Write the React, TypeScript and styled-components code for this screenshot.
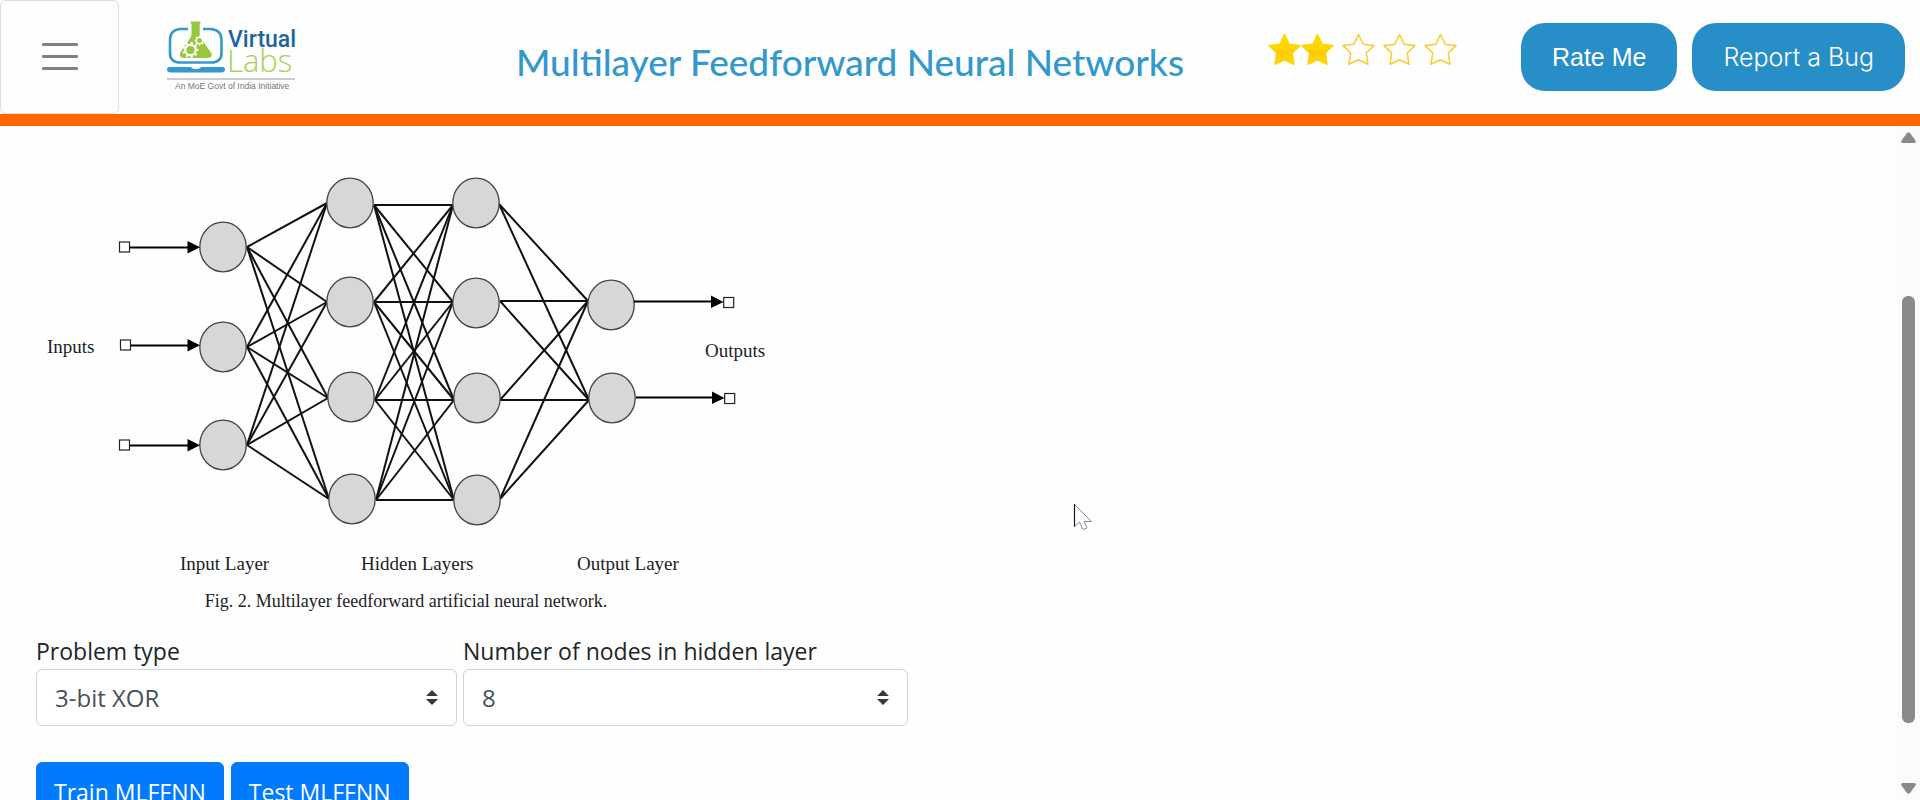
import React from 'react';
import styled, { createGlobalStyle, css } from 'styled-components';

const GlobalStyle = createGlobalStyle`
  *, *::before, *::after { box-sizing: border-box; }
  body {
    margin: 0;
    background: #fefefe;
    color: #212529;
    font-family: "Open Sans", "Noto Sans", sans-serif;
    font-size: 23px;
    line-height: 36px;
  }
`;

const Page = styled.div`
  display: flex;
  flex-direction: column;
  height: 100vh;
  overflow: hidden;
`;

const Header = styled.header`
  display: flex;
  align-items: flex-start;
  flex: none;
  border-bottom: 12px solid #ff6600;
  padding-right: 15px;
`;

const MenuButton = styled.button`
  display: flex;
  flex-direction: column;
  align-items: center;
  justify-content: center;
  gap: 9px;
  flex: none;
  width: 119px;
  height: 114px;
  padding: 0 0 2px;
  background: transparent;
  border: 1px solid #dfdfdf;
  border-radius: 6px;
`;

const MenuLine = styled.span`
  width: 36px;
  height: 3px;
  border-radius: 1px;
  background: #808080;
`;

const LogoLink = styled.a`
  flex: none;
  margin: 20px 0 0 48px;
  line-height: 0;
`;

const Title = styled.h1`
  margin: 40px 84px 0 auto;
  color: #3399cc;
  font-family: Lato, sans-serif;
  font-size: 37px;
  font-weight: 500;
  line-height: 44px;
  white-space: nowrap;
`;

const Rating = styled.div`
  display: flex;
  flex: none;
  margin: 33px 64px 0 0;
`;

const StarIcon = styled.svg<{ $filled: boolean }>`
  display: block;
  width: 33px;
  height: 33px;
  ${({ $filled }) =>
    !$filled &&
    css`
      margin-left: 8px;
    `}
`;

const Actions = styled.div`
  display: flex;
  flex: none;
  gap: 15px;
  padding-top: 23px;
`;

const ActionButton = styled.button<{ $strong?: boolean }>`
  height: 68px;
  padding: 0 31px;
  border: 0;
  border-radius: 24px;
  background: #288ec8;
  color: #ffffff;
  font-family: ${({ $strong }) => ($strong ? '"Liberation Sans", Arial' : 'Inter')}, sans-serif;
  font-size: 25px;
  font-weight: ${({ $strong }) => ($strong ? 400 : 300)};
  white-space: nowrap;
`;

const Body = styled.div`
  display: flex;
  flex: 1;
  min-height: 0;
`;

const Content = styled.main`
  flex: 1;
  min-width: 0;
  overflow: hidden;
  padding: 0 36px;
`;

const Figure = styled.figure`
  width: 740px;
  max-width: 100%;
  margin: 0;
  color: #1d1d26;
  font-family: "Liberation Serif", serif;
`;

const Diagram = styled.svg`
  display: block;
  width: 100%;
  height: auto;
`;

const Caption = styled.figcaption`
  font-size: 18px;
  line-height: 30px;
  text-align: center;
`;

const Fields = styled.form`
  display: flex;
  gap: 6px;
  margin-top: 17px;
`;

const Field = styled.div<{ $width: number }>`
  flex: 0 1 ${({ $width }) => $width}px;
`;

const FieldLabel = styled.label`
  display: block;
  line-height: 36px;
`;

const SelectWrap = styled.div`
  position: relative;
`;

const Select = styled.select`
  display: block;
  width: 100%;
  height: 57px;
  padding: 0 48px 0 18px;
  appearance: none;
  border: 1px solid #ced4da;
  border-radius: 6px;
  background: #ffffff;
  color: #495057;
  font: inherit;
  font-size: 24px;
`;

const SelectArrows = styled.svg`
  position: absolute;
  top: 21px;
  right: 19px;
  width: 12px;
  height: 15px;
  fill: #343a40;
  pointer-events: none;
`;

const Buttons = styled.div`
  display: flex;
  gap: 7px;
  margin: 36px 0;
`;

const PrimaryButton = styled.button`
  height: 57px;
  padding: 2px 17px 0;
  border: 1px solid #007bff;
  border-radius: 6px;
  background: #007bff;
  color: #ffffff;
  font: inherit;
  white-space: nowrap;
`;

const Scrollbar = styled.div`
  display: flex;
  flex-direction: column;
  align-items: center;
  flex: none;
  width: 23px;
  padding: 6px 0;
  background: #fbfbfb;
`;

const ScrollArrow = styled.svg`
  flex: none;
  width: 15px;
  height: 11px;
  fill: #8a8a8a;
`;

const ScrollTrack = styled.div`
  display: grid;
  grid-template-rows: 153fr 427fr 60fr;
  flex: 1;
`;

const ScrollThumb = styled.div`
  grid-row: 2;
  width: 13px;
  border-radius: 6px;
  background: #8a8a8a;
`;

const Pointer = styled.svg`
  position: fixed;
  left: 1073px;
  top: 502px;
  width: 20px;
  height: 30px;
  pointer-events: none;
`;

type Point = [number, number];

const inputNodes: Point[] = [[223, 247], [223, 347], [223, 445]];
const hiddenA: Point[] = [[350, 203], [350, 302], [351, 397], [352, 499]];
const hiddenB: Point[] = [[476, 203], [476, 303], [477, 398], [477, 500]];
const outputNodes: Point[] = [[611, 305], [612, 398]];

const inputOut: Point[] = [[247, 247], [247, 347], [247, 445]];
const hiddenAIn: Point[] = [[327, 203], [327, 302], [328, 398], [329, 499]];
const hiddenAOut: Point[] = [[374, 205], [374, 302], [375, 400], [376, 500]];
const hiddenBIn: Point[] = [[453, 205], [453, 302], [454, 400], [454, 500]];
const hiddenBOut: Point[] = [[499, 204], [500, 301], [500, 400], [500, 499]];
const outputIn: Point[] = [[588, 301], [589, 400]];

const inputArrows = [
  { x: 120, y: 247 },
  { x: 121, y: 345 },
  { x: 120, y: 445 },
];
const outputArrows = [
  { from: 634, x: 724, y: 302 },
  { from: 636, x: 725, y: 398 },
];

const layerLabels = [
  { x: 47, y: 353, text: 'Inputs' },
  { x: 705, y: 357, text: 'Outputs' },
  { x: 180, y: 570, text: 'Input Layer' },
  { x: 361, y: 570, text: 'Hidden Layers' },
  { x: 577, y: 570, text: 'Output Layer' },
];

function links(from: Point[], to: Point[], key: string) {
  return from.flatMap(([x1, y1], i) =>
    to.map(([x2, y2], j) => <line key={`${key}${i}${j}`} x1={x1} y1={y1} x2={x2} y2={y2} />),
  );
}

function NetworkDiagram() {
  return (
    <Diagram viewBox="36 126 740 460" role="img" aria-label="Multilayer feedforward neural network">
      <g stroke="#111111" strokeWidth="2">
        {links(inputOut, hiddenAIn, 'a')}
        {links(hiddenAOut, hiddenBIn, 'b')}
        {links(hiddenBOut, outputIn, 'c')}
      </g>
      <g fill="#d7d7d7" stroke="#444444" strokeWidth="1.3">
        {[...inputNodes, ...hiddenA, ...hiddenB, ...outputNodes].map(([cx, cy]) => (
          <ellipse key={`${cx}-${cy}`} cx={cx} cy={cy} rx="23.2" ry="24.8" />
        ))}
      </g>
      {inputArrows.map(({ x, y }) => (
        <g key={y}>
          <rect x={x - 0.5} y={y - 5} width="10" height="10" fill="#fff" stroke="#222" strokeWidth="1.2" />
          <line x1={x + 10} y1={y + 0.5} x2="190" y2={y + 0.5} stroke="#000" strokeWidth="2" />
          <path d={`M187.5 ${y - 6}L200 ${y + 0.3}L187.5 ${y + 6.5}Z`} />
        </g>
      ))}
      {outputArrows.map(({ from, x, y }) => (
        <g key={y}>
          <rect x={x - 0.3} y={y - 4.5} width="10" height="10" fill="#fff" stroke="#222" strokeWidth="1.2" />
          <line x1={from} y1={y - 0.5} x2={x - 10} y2={y - 0.5} stroke="#000" strokeWidth="2" />
          <path d={`M${x - 13} ${y - 6.5}L${x - 0.5} ${y}L${x - 13} ${y + 6}Z`} />
        </g>
      ))}
      <g fill="#1d1d26" fontSize="19">
        {layerLabels.map(({ x, y, text }) => (
          <text key={text} x={x} y={y}>{text}</text>
        ))}
      </g>
    </Diagram>
  );
}

function gear(cx: number, cy: number, r: number, teeth: number) {
  return (
    <g stroke="#fff" fill="none">
      <circle cx={cx} cy={cy} r={r} strokeWidth={r * 0.42} />
      {Array.from({ length: teeth }, (_, i) => {
        const a = (i / teeth) * Math.PI * 2;
        return (
          <line
            key={i}
            x1={cx + Math.cos(a) * r}
            y1={cy + Math.sin(a) * r}
            x2={cx + Math.cos(a) * r * 1.55}
            y2={cy + Math.sin(a) * r * 1.55}
            strokeWidth={r * 0.42}
          />
        );
      })}
    </g>
  );
}

function Logo() {
  return (
    <svg width="130" height="74" viewBox="167 20 130 74" role="img" aria-label="Virtual Labs">
      <path
        d="M188 29H180Q170 30 170 40V53Q170 62.500 180 62.500H211Q221.500 62.500 221.500 53V40Q221.500 30 211 29H203"
        fill="none"
        stroke="#3399cc"
        strokeWidth="2.600"
      />
      <path d="M169.500 67H191Q192 69 196 69Q200 69 201 67H222.500Q225 67 225 69.500Q225 72.500 221 72.500H171Q167 72.500 167 69.500Q167 67 169.500 67Z" fill="#3399cc" />
      <path d="M190.500 21.500H200.500V23.500H199.700V34Q200 37 202 40L211 52.500Q213.500 57.500 207.500 58H184Q178 57.500 180.500 52L189 40Q191.500 37 191.500 34V23.500H190.500Z" fill="#96c83c" />
      {gear(190.500, 50, 5.200, 9)}
      {gear(199.500, 40.500, 3.200, 8)}
      <text x="228" y="47" fill="#1b679b" fontFamily="Roboto" fontSize="23" fontWeight="500">Virtual</text>
      <text x="227" y="72" fill="#a5d05a" fontFamily="Open Sans" fontSize="31" fontWeight="300">Labs</text>
      <rect x="167" y="78.500" width="128" height="1" fill="#999" />
      <text x="175" y="89" fill="#777" fontFamily="Liberation Sans" fontSize="8.500">An MoE Govt of India Initiative</text>
    </svg>
  );
}

const starPath =
  'M16.500 1.500L21.200 11.300L32 12.600L24.300 19.800L26 31.300L16.500 26.800L7 31.300L8.700 19.800L1 12.600L11.800 11.300Z';

function Star({ filled }: { filled: boolean }) {
  return (
    <StarIcon $filled={filled} viewBox="0 0 33 33">
      <defs>
        <linearGradient id="gold" x1="0" y1="0" x2="0" y2="1">
          <stop offset="0.500" stopColor="#ffd800" />
          <stop offset="0.550" stopColor="#ffc90a" />
          <stop offset="1" stopColor="#ffd800" />
        </linearGradient>
      </defs>
      <path
        d={starPath}
        fill={filled ? 'url(#gold)' : '#fff'}
        stroke={filled ? 'url(#gold)' : '#fbcb2a'}
        strokeWidth="1.500"
        strokeLinejoin="round"
      />
    </StarIcon>
  );
}

interface SelectFieldProps {
  id: string;
  label: string;
  width: number;
  options: string[];
  initial: string;
}

function SelectField({ id, label, width, options, initial }: SelectFieldProps) {
  return (
    <Field $width={width}>
      <FieldLabel htmlFor={id}>{label}</FieldLabel>
      <SelectWrap>
        <Select id={id} defaultValue={initial}>
          {options.map((option) => (
            <option key={option}>{option}</option>
          ))}
        </Select>
        <SelectArrows viewBox="0 0 12 15" aria-hidden="true">
          <path d="M0 6L6 0L12 6ZM0 9H12L6 15Z" />
        </SelectArrows>
      </SelectWrap>
    </Field>
  );
}

export default function App() {
  return (
    <Page>
      <GlobalStyle />
      <Header>
        <MenuButton type="button" aria-label="Toggle navigation">
          <MenuLine />
          <MenuLine />
          <MenuLine />
        </MenuButton>
        <LogoLink href="#home">
          <Logo />
        </LogoLink>
        <Title>Multilayer Feedforward Neural Networks</Title>
        <Rating role="img" aria-label="Rated 2 out of 5">
          {[1, 2, 3, 4, 5].map((n) => (
            <Star key={n} filled={n <= 2} />
          ))}
        </Rating>
        <Actions>
          <ActionButton type="button" $strong>Rate Me</ActionButton>
          <ActionButton type="button">Report a Bug</ActionButton>
        </Actions>
      </Header>
      <Body>
        <Content>
          <Figure>
            <NetworkDiagram />
            <Caption>Fig. 2. Multilayer feedforward artificial neural network.</Caption>
          </Figure>
          <Fields>
            <SelectField
              id="problem"
              label="Problem type"
              width={421}
              options={['3-bit XOR']}
              initial="3-bit XOR"
            />
            <SelectField
              id="nodes"
              label="Number of nodes in hidden layer"
              width={445}
              options={['8']}
              initial="8"
            />
          </Fields>
          <Buttons>
            <PrimaryButton type="button">Train MLFFNN</PrimaryButton>
            <PrimaryButton type="button">Test MLFFNN</PrimaryButton>
          </Buttons>
        </Content>
        <Scrollbar aria-hidden="true">
          <ScrollArrow viewBox="0 0 15 11">
            <path d="M6 1Q7.500 -0.500 9 1L14.500 8.500Q15.500 11 13 11H2Q-0.500 11 0.500 8.500Z" />
          </ScrollArrow>
          <ScrollTrack>
            <ScrollThumb />
          </ScrollTrack>
          <ScrollArrow viewBox="0 0 15 11">
            <path d="M6 10Q7.500 11.500 9 10L14.500 2.500Q15.500 0 13 0H2Q-0.500 0 0.500 2.500Z" />
          </ScrollArrow>
        </Scrollbar>
      </Body>
      <Pointer viewBox="0 0 20 30" aria-hidden="true">
        <path
          d="M1.500 2.500V24.500L6.500 20L10 27.500L14 26L11 19.500H18.500Z"
          fill="#fff"
          stroke="#8a8a96"
          strokeWidth="1"
        />
        <path d="M1.500 2V24.500" stroke="#15152a" strokeWidth="1.200" />
      </Pointer>
    </Page>
  );
}
